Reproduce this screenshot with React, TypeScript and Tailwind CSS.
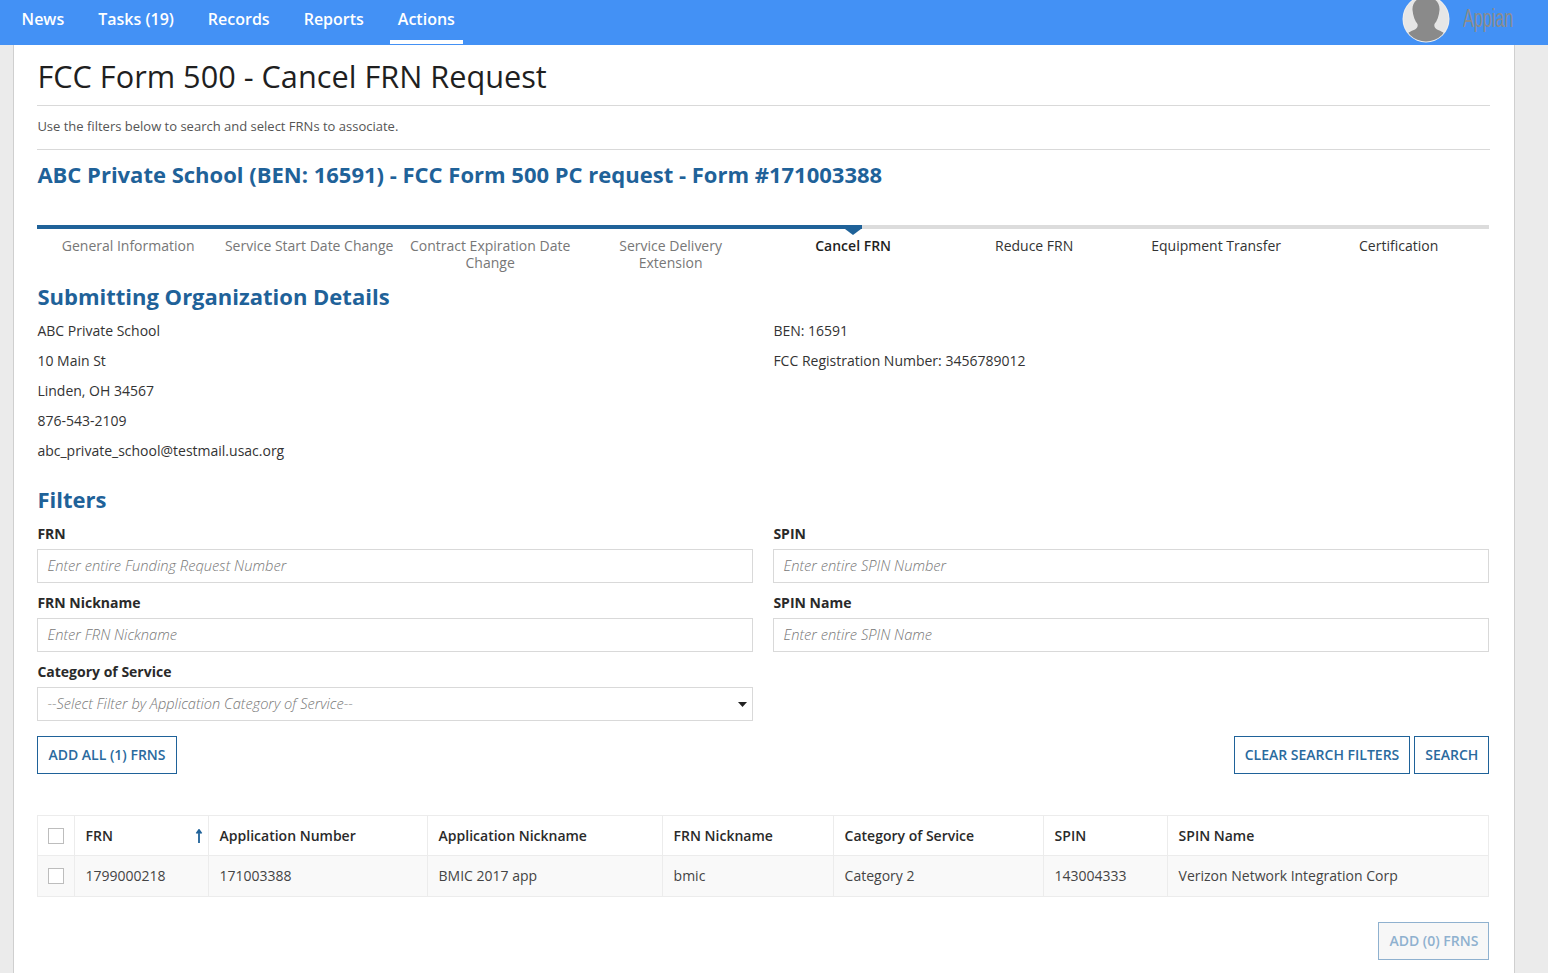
import React from "react";

const nav = ["News", "Tasks (19)", "Records", "Reports", "Actions"];
const steps = [
  ["General Information", "text-[#777] pl-[6px] pr-[6px]"],
  ["Service Start Date Change", "text-[#777] pl-[6px] pr-[7px]"],
  ["Contract Expiration Date Change", "text-[#777] pl-[6px] pr-[8px]"],
  ["Service Delivery Extension", "text-[#777] pl-[6px] pr-[10px]"],
  ["Cancel FRN", "font-semibold text-[#1f1f1f] pl-[6px] pr-[8px]"],
  ["Reduce FRN", "text-[#333] pl-[6px] pr-[9px]"],
  ["Equipment Transfer", "text-[#333] pl-[6px] pr-[8px]"],
  ["Certification", "text-[#333] pl-[6px] pr-[6px]"],
];
const org = ["ABC Private School", "10 Main St", "Linden, OH 34567", "876-543-2109", "abc_private_school@testmail.usac.org"];
const cols = [
  ["Application Number", "171003388", "w-[219px]"],
  ["Application Nickname", "BMIC 2017 app", "w-[235px]"],
  ["FRN Nickname", "bmic", "w-[171px]"],
  ["Category of Service", "Category 2", "w-[210px]"],
  ["SPIN", "143004333", "w-[124px]"],
  ["SPIN Name", "Verizon Network Integration Corp", ""],
];

function Field({ label, placeholder }: { label: string; placeholder: string }) {
  return (
    <div>
      <div className="h-[19px] text-[14px] leading-[19px] font-bold text-[#2a2a2a]">{label}</div>
      <input
        readOnly
        placeholder={placeholder}
        className="mt-[6px] block h-[34px] w-full border border-[#d9d9d9] bg-white px-[9px] pb-[2px] text-[14.7px] italic font-light text-[#555] placeholder:text-[#777] outline-none"
      />
    </div>
  );
}

function Btn({ children }: { children: React.ReactNode }) {
  return (
    <button className="h-[38px] border border-[#1f6299] bg-white px-[10px] pb-[2px] text-[14px] font-semibold text-[#2a6a9e]">
      {children}
    </button>
  );
}

function Check() {
  return <span className="block h-[16px] w-[16px] border border-[#bdbdbd] bg-white" />;
}

export default function App() {
  return (
    <div className="h-[973px] overflow-hidden bg-[#ebebeb] font-['Open_Sans',sans-serif] text-[#333]">
      <header className="flex h-[45px] items-start justify-between bg-[#4391f5] pl-[13.6px] pr-[35px]">
        <nav className="flex gap-[18px]">
          {nav.map((n) => (
            <a
              key={n}
              className={`h-[44px] px-[8px] pt-[7px] text-[16px] leading-[24px] font-semibold text-white ${
                n === "Actions" ? "border-b-[4px] border-white" : ""
              }`}
            >
              {n}
            </a>
          ))}
        </nav>
        <div className="flex items-start gap-[13px]">
          <svg width="48" height="48" viewBox="0 0 48 48" className="-mt-[5px]">
            <defs>
              <clipPath id="av">
                <circle cx="24" cy="24" r="22.500" />
              </clipPath>
            </defs>
            <circle cx="24" cy="24" r="23.500" fill="#eeeeee" />
            <circle cx="24" cy="24" r="22.500" fill="#e6e6e6" />
            <g clipPath="url(#av)">
              <path
                d="M24 2C15 2 10 8 10.500 15 11 21 13 26 15.500 29 16 31 15.500 33 13 34.500 10 36 6 37 5 40L5 48H43V40C42 37 38 36 35 34.500 32.500 33 32 31 32.500 29 35 26 37 21 37.500 15 38 8 33 2 24 2z"
                fill="#8a8a8a"
              />
            </g>
          </svg>
          <span className="block w-[50px] origin-left scale-x-[0.62] whitespace-nowrap pt-[3px] font-['Liberation_Sans',sans-serif] text-[26px] leading-[30px] text-[#8c8c8c]">
            Appian
          </span>
        </div>
      </header>

      <main className="mx-[13px] h-[928px] w-[1502px] border-x border-x-[#cfcfcf] bg-white pl-[23.4px] pr-[24px]">
        <h1 className="h-[61px] border-b border-[#d9d9d9] pt-[11px] text-[30.7px] leading-[40px] font-normal text-[#1f1f1f]">
          FCC Form 500 - Cancel FRN Request
        </h1>
        <p className="h-[44px] border-b border-[#d9d9d9] pt-[11px] text-[13px] leading-[18px] text-[#555]">
          Use the filters below to search and select FRNs to associate.
        </p>
        <h2 className="h-[75px] pt-[8px] text-[22px] leading-[32px] font-bold text-[#1f6299]">
          ABC Private School (BEN: 16591) - FCC Form 500 PC request - Form #171003388
        </h2>

        <div className="w-[1452px]">
          <div className="relative h-[4px] bg-[#dcdcdc]">
            <div className="h-[4px] w-[825px] bg-[#1f6299]" />
            <svg width="16" height="6" viewBox="0 0 16 6" className="absolute left-[808px] top-[4px]">
              <path d="M0 0h16L8 6z" fill="#1f6299" />
            </svg>
          </div>
          <div className="grid grid-cols-8 pt-[8px]">
            {steps.map(([s, cls]) => (
              <div key={s} className={`h-[46px] text-center text-[14px] leading-[17px] ${cls}`}>
                {s}
              </div>
            ))}
          </div>
        </div>

        <h3 className="-mt-[2px] h-[30px] text-[22px] leading-[30px] font-bold text-[#1f6299]">Submitting Organization Details</h3>
        <div className="grid w-[1452px] grid-cols-2 gap-x-[20px] pt-[5px]">
          <div>
            {org.map((o) => (
              <div key={o} className="h-[30px] text-[14px] leading-[30px] text-[#333]">
                {o}
              </div>
            ))}
          </div>
          <div>
            <div className="h-[30px] text-[14px] leading-[30px]">BEN: 16591</div>
            <div className="h-[30px] text-[14px] leading-[30px]">FCC Registration Number: 3456789012</div>
          </div>
        </div>

        <h3 className="mt-[17px] h-[32px] text-[22px] leading-[32px] font-bold text-[#1f6299]">Filters</h3>
        <div className="mt-[9px] grid w-[1452px] grid-cols-2 gap-x-[20px] gap-y-[10px]">
          <Field label="FRN" placeholder="Enter entire Funding Request Number" />
          <Field label="SPIN" placeholder="Enter entire SPIN Number" />
          <Field label="FRN Nickname" placeholder="Enter FRN Nickname" />
          <Field label="SPIN Name" placeholder="Enter entire SPIN Name" />
          <div>
            <div className="h-[19px] text-[14px] leading-[19px] font-bold text-[#2a2a2a]">Category of Service</div>
            <div className="mt-[6px] flex h-[34px] items-center justify-between border border-[#d9d9d9] bg-white pl-[9px] pr-[5px] text-[14.6px] italic font-light text-[#777]">
              <span>--Select Filter by Application Category of Service--</span>
              <svg width="9" height="5" viewBox="0 0 9 5">
                <path d="M0 0h9L4.500 5z" fill="#222" />
              </svg>
            </div>
          </div>
        </div>

        <div className="mt-[15px] flex w-[1452px] items-start justify-between">
          <Btn>ADD ALL (1) FRNS</Btn>
          <div className="flex gap-[4px]">
            <Btn>CLEAR SEARCH FILTERS</Btn>
            <Btn>SEARCH</Btn>
          </div>
        </div>

        <table className="mt-[41px] w-[1452px] table-fixed border-collapse border border-[#ececec] text-[14px]">
          <thead>
            <tr className="h-[40px] border-b border-[#ececec] bg-white">
              <th className="w-[37px] border-r border-[#ececec] pl-[10px] text-left font-normal">
                <Check />
              </th>
              <th className="relative w-[134px] border-r border-[#ececec] pl-[10.2px] text-left font-semibold text-[#2a2a2a]">
                FRN
                <svg width="8" height="14" viewBox="0 0 8 14" className="absolute right-[5px] top-[13px]">
                  <path d="M4 1v13M1.500 4.500 4 1l2.500 3.500" fill="none" stroke="#1f6299" strokeWidth="1.800" />
                </svg>
              </th>
              {cols.map(([h, , w], i) => (
                <th
                  key={h}
                  className={`${w} ${i < cols.length - 1 ? "border-r border-[#ececec]" : ""} pl-[10.2px] text-left font-semibold text-[#2a2a2a]`}
                >
                  {h}
                </th>
              ))}
            </tr>
          </thead>
          <tbody>
            <tr className="h-[41px] bg-[#f9f9f9]">
              <td className="border-r border-[#ececec] pl-[10px]">
                <Check />
              </td>
              <td className="border-r border-[#ececec] pb-[2px] pl-[10.2px] text-[#444]">1799000218</td>
              {cols.map(([h, v], i) => (
                <td key={h} className={`${i < cols.length - 1 ? "border-r border-[#ececec]" : ""} pb-[2px] pl-[10.2px] text-[#444]`}>
                  {v}
                </td>
              ))}
            </tr>
          </tbody>
        </table>

        <div className="mt-[25px] flex w-[1452px] justify-end">
          <button className="h-[38px] border border-[#8fb1cf] bg-[#f7f7f7] px-[10px] pb-[2px] text-[14px] font-semibold text-[#8fb1cf]">
            ADD (0) FRNS
          </button>
        </div>
      </main>
    </div>
  );
}
